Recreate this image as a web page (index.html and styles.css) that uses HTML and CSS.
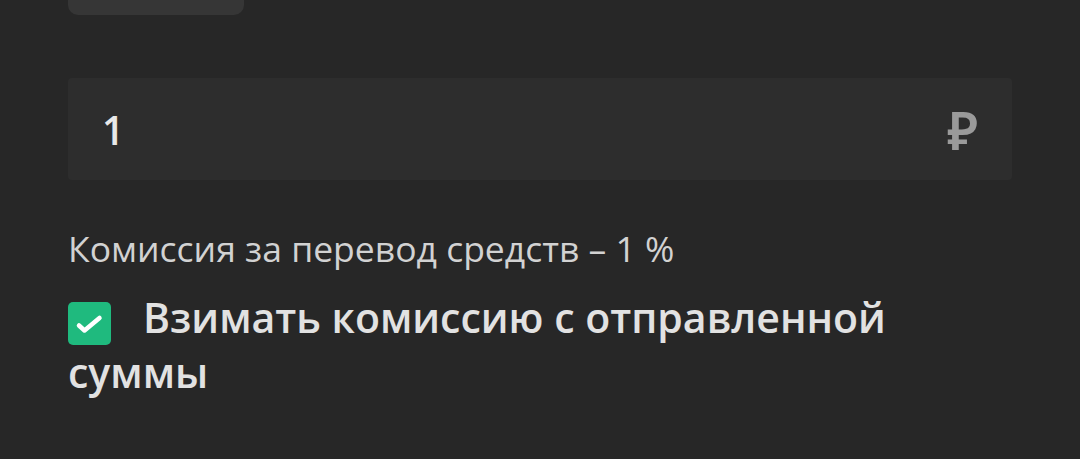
FILE: index.html
```html
<!DOCTYPE html>
<html lang="ru">
<head>
	<meta charset="UTF-8">
	<title>Перевод</title>
	<link rel="stylesheet" href="styles.css">
</head>
<body>
	<div class="form">
		<div class="tab"></div>
		<div class="amount">
			<span class="amount-value">1</span>
			<span class="amount-currency">₽</span>
		</div>
		<p class="fee">Комиссия за перевод средств – 1 %</p>
		<label class="check">
			<span class="check-box">
				<svg width="43" height="43" viewBox="0 0 43 43"><path d="M11 23.5l5.5 5L31.5 16" fill="none" stroke="#fff" stroke-width="4.5" stroke-linecap="round" stroke-linejoin="round"/></svg>
			</span>Взимать комиссию с отправленной суммы
		</label>
	</div>
</body>
</html>
```

FILE: styles.css
```css
*{
	margin: 0;
	padding: 0;
	box-sizing: border-box;
}
html, body{
	height: 100%;
}
body{
	background-color: #272727;
	font-family: "Open Sans", "Noto Sans", sans-serif;
	overflow: hidden;
}
.form{
	width: 944px;
	margin-left: 68px;
	display: flex;
	flex-direction: column;
}
.tab{
	width: 176px;
	height: 15px;
	background-color: #363636;
	border-radius: 0 0 10px 10px;
}
.amount{
	margin-top: 63px;
	height: 102px;
	background-color: #2d2d2d;
	border-radius: 4px;
	display: flex;
	align-items: center;
	justify-content: space-between;
	padding: 0 34px 0 34px;
}
.amount-value{
	font-size: 39px;
	font-weight: 600;
	color: #e8e8e8;
}
.amount-currency{
	font-size: 52px;
	font-weight: 600;
	color: #9a9a9a;
}
.fee{
	margin-top: 44px;
	font-size: 35.5px;
	line-height: 48px;
	color: #d2d2d2;
}
.check{
	margin-top: 18px;
	font-size: 41px;
	font-weight: 600;
	line-height: 54px;
	color: #e2e2e2;
	width: 840px;
}
.check-box{
	display: inline-block;
	width: 43px;
	height: 43px;
	background-color: #1fba7e;
	border-radius: 5px;
	margin-right: 32px;
	vertical-align: -12px;
}
.check-box svg{
	display: block;
}
```
